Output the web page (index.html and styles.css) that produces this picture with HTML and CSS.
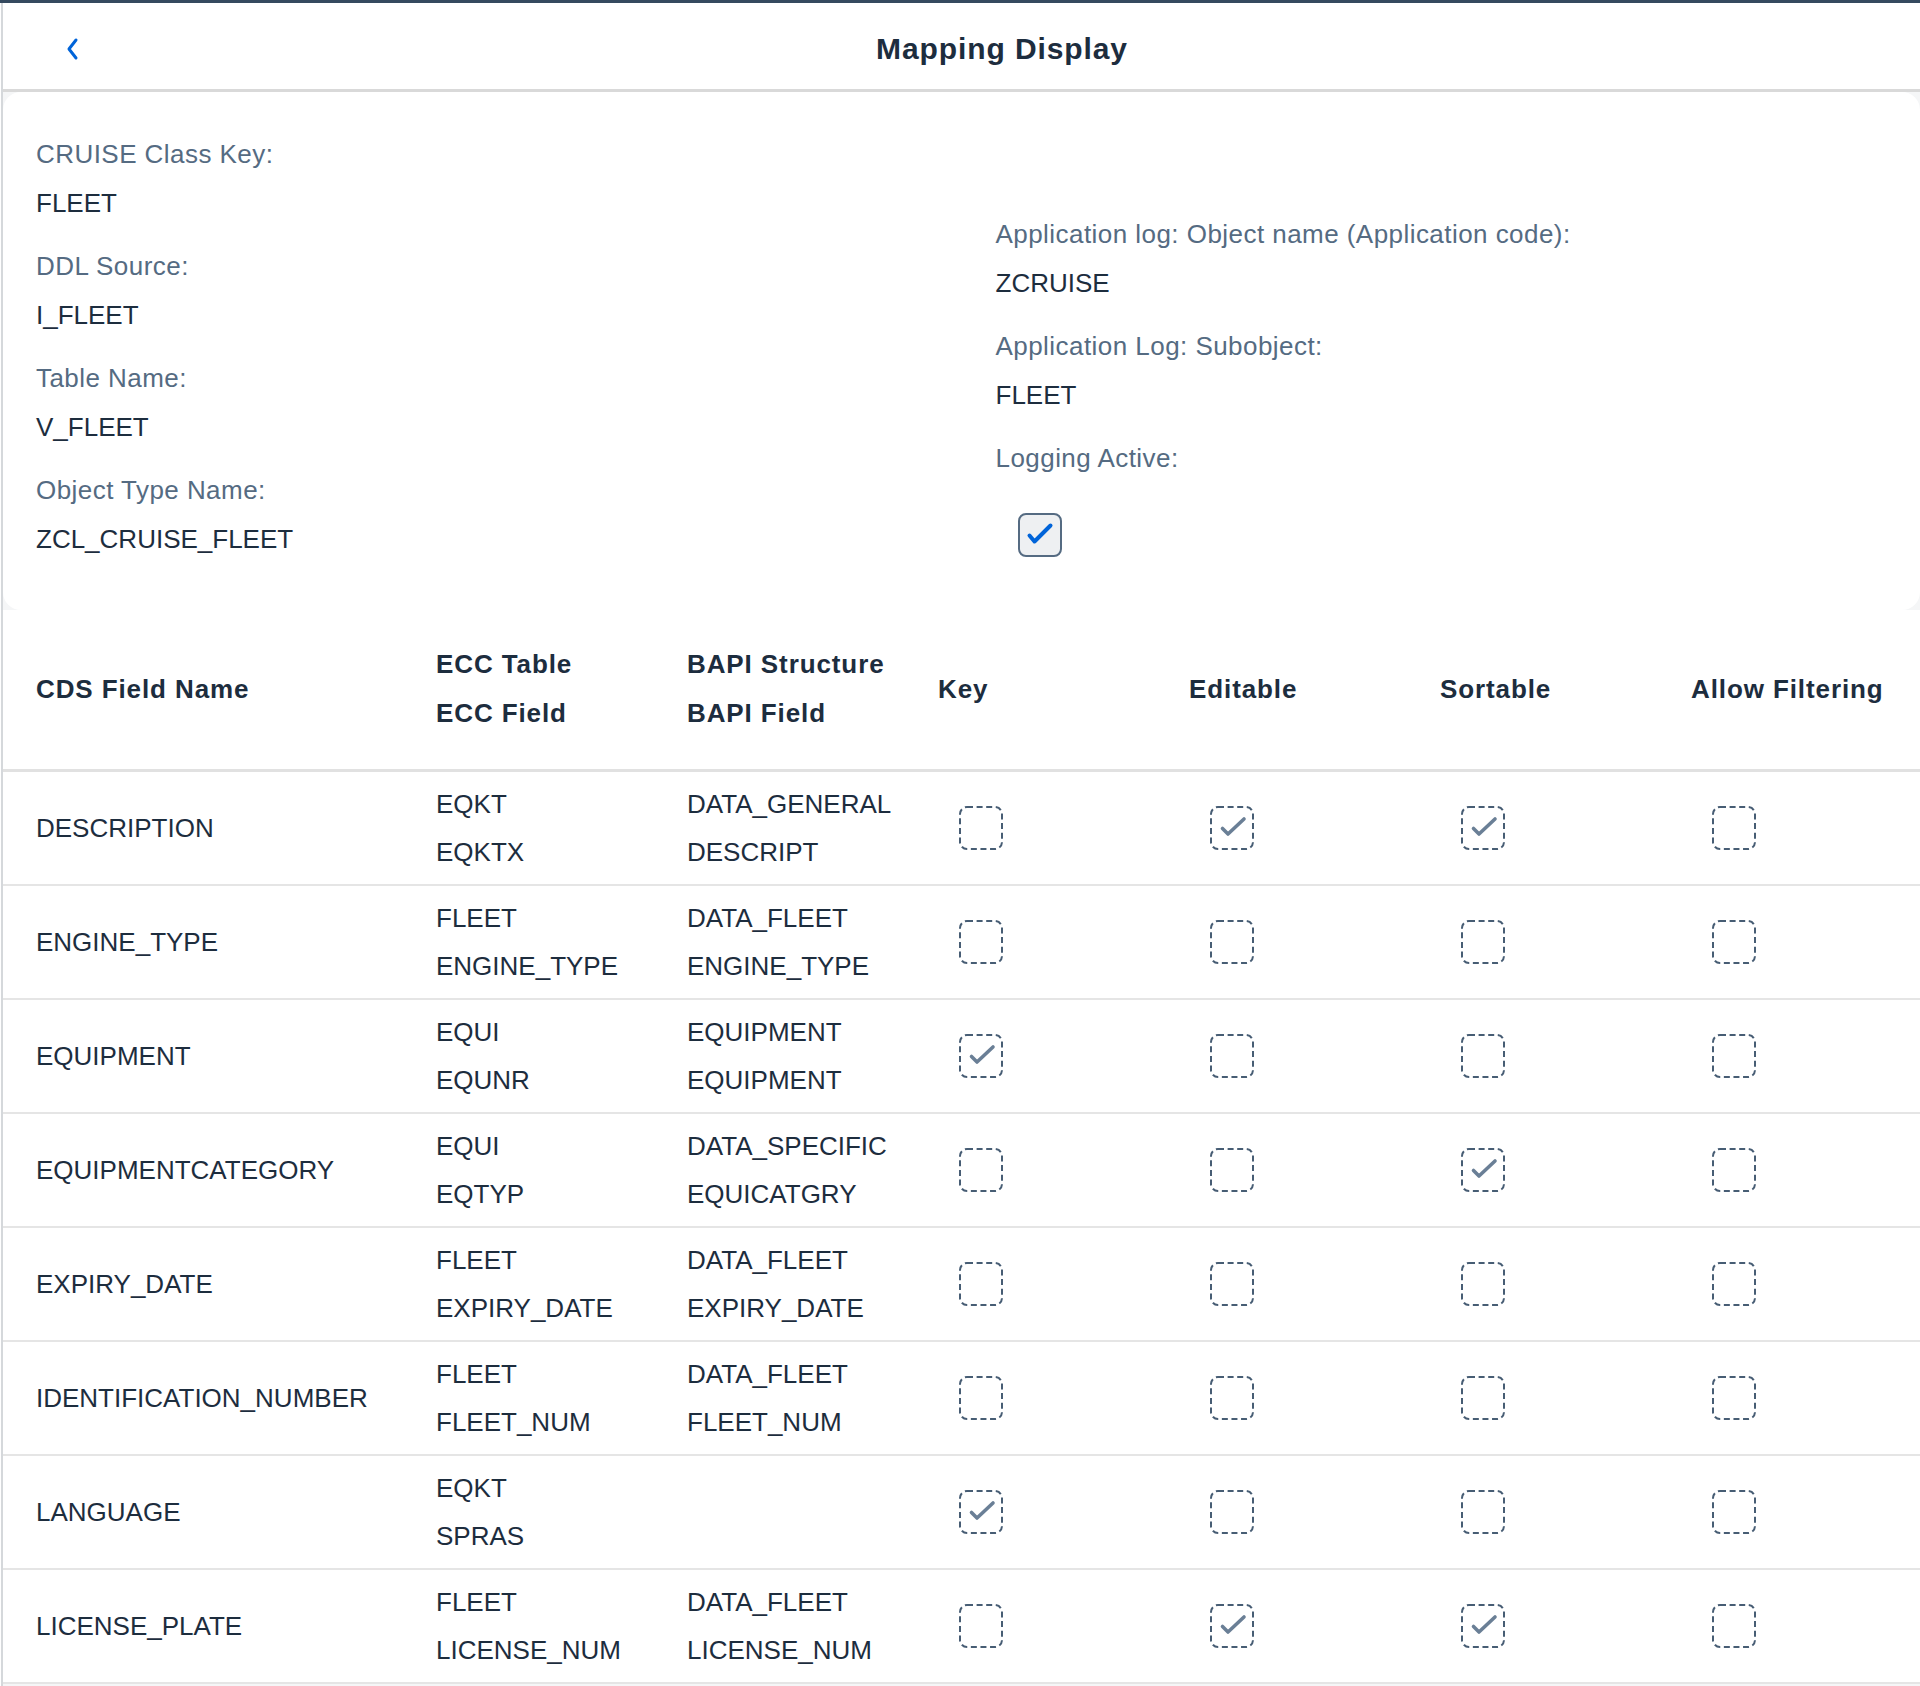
FILE: index.html
```html
<!DOCTYPE html>
<html lang="en">
<head>
<meta charset="utf-8">
<title>Mapping Display</title>
<link rel="stylesheet" href="styles.css">
</head>
<body>
<svg class="defs" width="0" height="0" aria-hidden="true">
  <defs>
    <symbol id="cb-empty" viewBox="0 0 44 44">
      <rect x="1" y="1" width="42" height="42" rx="7" fill="none" stroke="#475d74" stroke-width="2" stroke-dasharray="6 3.6"/>
    </symbol>
    <symbol id="cb-check" viewBox="0 0 44 44">
      <rect x="1" y="1" width="42" height="42" rx="7" fill="none" stroke="#475d74" stroke-width="2" stroke-dasharray="6 3.6"/>
      <path d="M12.5 22.5 L18 28 L34 13" fill="none" stroke="#6a7f96" stroke-width="3.6" stroke-linecap="round" stroke-linejoin="round"/>
    </symbol>
  </defs>
</svg>
<div class="app">
  <header class="header">
    <button class="back" aria-label="Back">
      <svg width="16" height="24" viewBox="0 0 16 24"><path d="M12 3 L5 12 L12 21" fill="none" stroke="#0064d9" stroke-width="3" stroke-linecap="round" stroke-linejoin="round"/></svg>
    </button>
    <h1 class="title">Mapping Display</h1>
  </header>

  <section class="form">
    <div class="col">
      <div class="field"><div class="label">CRUISE Class Key:</div><div class="value">FLEET</div></div>
      <div class="field"><div class="label">DDL Source:</div><div class="value">I_FLEET</div></div>
      <div class="field"><div class="label">Table Name:</div><div class="value">V_FLEET</div></div>
      <div class="field"><div class="label">Object Type Name:</div><div class="value">ZCL_CRUISE_FLEET</div></div>
    </div>
    <div class="col col-right">
      <div class="field"><div class="label">Application log: Object name (Application code):</div><div class="value">ZCRUISE</div></div>
      <div class="field"><div class="label">Application Log: Subobject:</div><div class="value">FLEET</div></div>
      <div class="field"><div class="label">Logging Active:</div>
        <div class="form-cb">
          <svg width="44" height="44" viewBox="0 0 44 44"><rect x="1" y="1" width="42" height="42" rx="7" fill="#eef0f2" stroke="#556b82" stroke-width="2"/><path d="M11.5 22.5 L16.5 28.5 L32.5 12.5" fill="none" stroke="#0064d9" stroke-width="4" stroke-linecap="round" stroke-linejoin="round"/></svg>
        </div>
      </div>
    </div>
  </section>

  <section class="table">
    <div class="thead">
      <div class="hcell">CDS Field Name</div>
      <div class="hcell">ECC Table<br>ECC Field</div>
      <div class="hcell">BAPI Structure<br>BAPI Field</div>
      <div class="hcell">Key</div>
      <div class="hcell">Editable</div>
      <div class="hcell">Sortable</div>
      <div class="hcell">Allow Filtering</div>
    </div>

    <div class="row">
      <div class="cell">DESCRIPTION</div>
      <div class="cell">EQKT<br>EQKTX</div>
      <div class="cell">DATA_GENERAL<br>DESCRIPT</div>
      <div class="cell"><svg class="cb"><use href="#cb-empty"/></svg></div>
      <div class="cell"><svg class="cb"><use href="#cb-check"/></svg></div>
      <div class="cell"><svg class="cb"><use href="#cb-check"/></svg></div>
      <div class="cell"><svg class="cb"><use href="#cb-empty"/></svg></div>
    </div>
    <div class="row">
      <div class="cell">ENGINE_TYPE</div>
      <div class="cell">FLEET<br>ENGINE_TYPE</div>
      <div class="cell">DATA_FLEET<br>ENGINE_TYPE</div>
      <div class="cell"><svg class="cb"><use href="#cb-empty"/></svg></div>
      <div class="cell"><svg class="cb"><use href="#cb-empty"/></svg></div>
      <div class="cell"><svg class="cb"><use href="#cb-empty"/></svg></div>
      <div class="cell"><svg class="cb"><use href="#cb-empty"/></svg></div>
    </div>
    <div class="row">
      <div class="cell">EQUIPMENT</div>
      <div class="cell">EQUI<br>EQUNR</div>
      <div class="cell">EQUIPMENT<br>EQUIPMENT</div>
      <div class="cell"><svg class="cb"><use href="#cb-check"/></svg></div>
      <div class="cell"><svg class="cb"><use href="#cb-empty"/></svg></div>
      <div class="cell"><svg class="cb"><use href="#cb-empty"/></svg></div>
      <div class="cell"><svg class="cb"><use href="#cb-empty"/></svg></div>
    </div>
    <div class="row">
      <div class="cell">EQUIPMENTCATEGORY</div>
      <div class="cell">EQUI<br>EQTYP</div>
      <div class="cell">DATA_SPECIFIC<br>EQUICATGRY</div>
      <div class="cell"><svg class="cb"><use href="#cb-empty"/></svg></div>
      <div class="cell"><svg class="cb"><use href="#cb-empty"/></svg></div>
      <div class="cell"><svg class="cb"><use href="#cb-check"/></svg></div>
      <div class="cell"><svg class="cb"><use href="#cb-empty"/></svg></div>
    </div>
    <div class="row">
      <div class="cell">EXPIRY_DATE</div>
      <div class="cell">FLEET<br>EXPIRY_DATE</div>
      <div class="cell">DATA_FLEET<br>EXPIRY_DATE</div>
      <div class="cell"><svg class="cb"><use href="#cb-empty"/></svg></div>
      <div class="cell"><svg class="cb"><use href="#cb-empty"/></svg></div>
      <div class="cell"><svg class="cb"><use href="#cb-empty"/></svg></div>
      <div class="cell"><svg class="cb"><use href="#cb-empty"/></svg></div>
    </div>
    <div class="row">
      <div class="cell">IDENTIFICATION_NUMBER</div>
      <div class="cell">FLEET<br>FLEET_NUM</div>
      <div class="cell">DATA_FLEET<br>FLEET_NUM</div>
      <div class="cell"><svg class="cb"><use href="#cb-empty"/></svg></div>
      <div class="cell"><svg class="cb"><use href="#cb-empty"/></svg></div>
      <div class="cell"><svg class="cb"><use href="#cb-empty"/></svg></div>
      <div class="cell"><svg class="cb"><use href="#cb-empty"/></svg></div>
    </div>
    <div class="row">
      <div class="cell">LANGUAGE</div>
      <div class="cell">EQKT<br>SPRAS</div>
      <div class="cell"></div>
      <div class="cell"><svg class="cb"><use href="#cb-check"/></svg></div>
      <div class="cell"><svg class="cb"><use href="#cb-empty"/></svg></div>
      <div class="cell"><svg class="cb"><use href="#cb-empty"/></svg></div>
      <div class="cell"><svg class="cb"><use href="#cb-empty"/></svg></div>
    </div>
    <div class="row">
      <div class="cell">LICENSE_PLATE</div>
      <div class="cell">FLEET<br>LICENSE_NUM</div>
      <div class="cell">DATA_FLEET<br>LICENSE_NUM</div>
      <div class="cell"><svg class="cb"><use href="#cb-empty"/></svg></div>
      <div class="cell"><svg class="cb"><use href="#cb-check"/></svg></div>
      <div class="cell"><svg class="cb"><use href="#cb-check"/></svg></div>
      <div class="cell"><svg class="cb"><use href="#cb-empty"/></svg></div>
    </div>
  </section>
</div>
</body>
</html>
```

FILE: styles.css
```css
html, body {
  margin: 0;
  padding: 0;
}

body {
  background: #ffffff;
  border-top: 3px solid #354a5f;
  font-family: "Liberation Sans", Arial, sans-serif;
  font-size: 26px;
  color: #1d2d3e;
  overflow: hidden;
}

.defs {
  position: absolute;
  width: 0;
  height: 0;
  overflow: hidden;
}

.app {
  margin-left: 1px;
  border-left: 2px solid #d5d8db;
  background: #f5f6f7;
  min-height: 1683px;
}

/* Header */
.header {
  display: flex;
  align-items: center;
  height: 81px;
  padding-top: 5px;
  padding-left: 57px;
  background: #ffffff;
  border-bottom: 3px solid #d9d9d9;
}

.back {
  width: 24px;
  height: 40px;
  padding: 0;
  border: 0;
  background: transparent;
  display: flex;
  align-items: center;
  justify-content: center;
}

.title {
  flex: 1;
  margin: 0;
  text-align: center;
  font-size: 30px;
  font-weight: 700;
  letter-spacing: 0.9px;
  color: #1d2d3e;
}

/* Form card */
.form {
  display: grid;
  grid-template-columns: 1fr 1fr;
  padding: 38px 0 46px;
  background: #ffffff;
  border-radius: 18px;
}

.col {
  padding-left: 33px;
}

.col-right {
  padding-top: 80px;
  padding-left: 34px;
}

.field {
  margin-bottom: 14px;
}

.field:last-child {
  margin-bottom: 0;
}

.label {
  line-height: 49px;
  color: #556b82;
  letter-spacing: 0.45px;
}

.value {
  line-height: 49px;
  color: #1d2d3e;
}

.form-cb {
  margin: 30px 0 0 22px;
  width: 44px;
  height: 44px;
}

.form-cb svg {
  display: block;
}

/* Table */
.table {
  background: #ffffff;
}

.thead,
.row {
  display: grid;
  grid-template-columns: 400px repeat(5, 251px) 1fr;
  align-items: center;
  padding-left: 33px;
}

.thead {
  padding-top: 30px;
  padding-bottom: 31px;
  border-bottom: 3px solid #e1e1e1;
}

.hcell {
  font-weight: 700;
  line-height: 49px;
  letter-spacing: 0.9px;
  color: #1d2d3e;
  white-space: nowrap;
}

.row {
  padding-top: 8px;
  padding-bottom: 8px;
  border-bottom: 2px solid #e5e5e5;
}

.cell {
  line-height: 48px;
  color: #1d2d3e;
  white-space: nowrap;
}

.cb {
  display: block;
  width: 44px;
  height: 44px;
  margin-left: 21px;
}
```
